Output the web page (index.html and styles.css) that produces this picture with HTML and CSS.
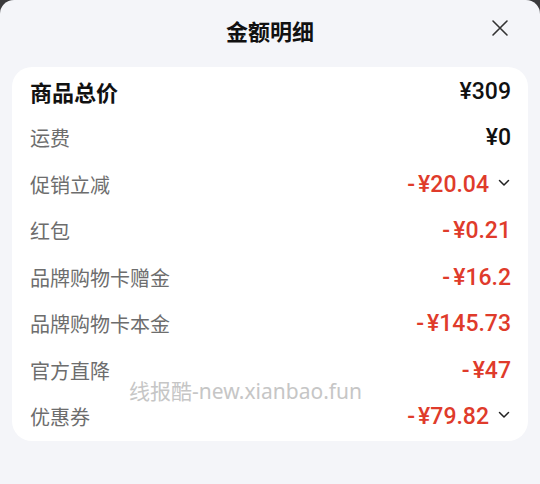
FILE: index.html
```html
<!DOCTYPE html>
<html lang="zh-CN">
<head>
  <meta charset="UTF-8">
  <meta name="viewport" content="width=device-width, initial-scale=1.0">
  <title>金额明细</title>
  <link rel="stylesheet" href="styles.css">
</head>
<body>
  <div class="sheet">
    <div class="header">
      <h1>金额明细</h1>
      <svg class="close" width="18" height="18" viewBox="0 0 18 18">
        <path d="M2 2 L16 16 M16 2 L2 16" stroke="#333" stroke-width="1.6" stroke-linecap="round" fill="none"/>
      </svg>
    </div>

    <div class="card">
      <div class="row total">
        <span class="label">商品总价</span>
        <span class="amount">¥309</span>
      </div>
      <div class="row">
        <span class="label">运费</span>
        <span class="amount">¥0</span>
      </div>
      <div class="row">
        <span class="label">促销立减</span>
        <span class="amount minus"><span class="sign">-</span>¥20.04</span>
        <svg class="chev" width="12" height="8" viewBox="0 0 12 8"><path d="M1.5 1.5 L6 6 L10.5 1.5" stroke="#222" stroke-width="1.5" fill="none" stroke-linecap="round" stroke-linejoin="round"/></svg>
      </div>
      <div class="row">
        <span class="label">红包</span>
        <span class="amount minus"><span class="sign">-</span>¥0.21</span>
      </div>
      <div class="row">
        <span class="label">品牌购物卡赠金</span>
        <span class="amount minus"><span class="sign">-</span>¥16.2</span>
      </div>
      <div class="row">
        <span class="label">品牌购物卡本金</span>
        <span class="amount minus"><span class="sign">-</span>¥145.73</span>
      </div>
      <div class="row">
        <span class="label">官方直降</span>
        <span class="amount minus"><span class="sign">-</span>¥47</span>
      </div>
      <div class="row">
        <span class="label">优惠券</span>
        <span class="amount minus"><span class="sign">-</span>¥79.82</span>
        <svg class="chev" width="12" height="8" viewBox="0 0 12 8"><path d="M1.5 1.5 L6 6 L10.5 1.5" stroke="#222" stroke-width="1.5" fill="none" stroke-linecap="round" stroke-linejoin="round"/></svg>
      </div>

      <!-- watermark -->
      <div class="watermark">线报酷-new.xianbao.fun</div>
    </div>
  </div>
</body>
</html>
```

FILE: styles.css
```css
body {
  margin: 0;
  background-color: #3a3a3c;
  font-family: "Noto Sans", "Noto Sans CJK SC", sans-serif;
}
.sheet {
  height: 484px;
  background-color: #f4f5f9;
  border-radius: 14px 14px 0 0;
  padding: 0 12px;
  box-sizing: border-box;
}
.header {
  height: 60px;
  display: flex;
  justify-content: center;
  align-items: center;
  position: relative;
  margin-bottom: 7px;
}
h1 {
  margin: 0;
  font-size: 22px;
  font-weight: 700;
  color: #111;
  font-family: "Noto Sans CJK SC", sans-serif;
}
.close {
  position: absolute;
  right: 19px;
  top: 19px;
}
.card {
  position: relative;
  background-color: #fff;
  border-radius: 20px;
  padding: 1px 17px 1px 18px;
}
.row {
  height: 46.5px;
  display: flex;
  align-items: center;
}
.label {
  flex: 1;
  font-size: 20px;
  color: #6d6d6d;
  font-family: "Noto Sans CJK SC", sans-serif;
}
.total .label {
  font-size: 22px;
  font-weight: 700;
  color: #111;
}
.amount {
  font-family: Roboto, "Noto Sans CJK SC", sans-serif;
  font-size: 23px;
  font-weight: 500;
  color: #111;
}
.amount.minus {
  color: #df3b2b;
}
.sign {
  margin-right: 3px;
}
.chev {
  margin-left: 9px;
  margin-right: 1px;
  margin-top: -3px;
}
.watermark {
  position: absolute;
  left: 117px;
  top: 308px;
  font-size: 21px;
  color: #c6c6c6;
  font-family: "Noto Sans", "Noto Sans CJK SC", sans-serif;
  pointer-events: none;
}
```
